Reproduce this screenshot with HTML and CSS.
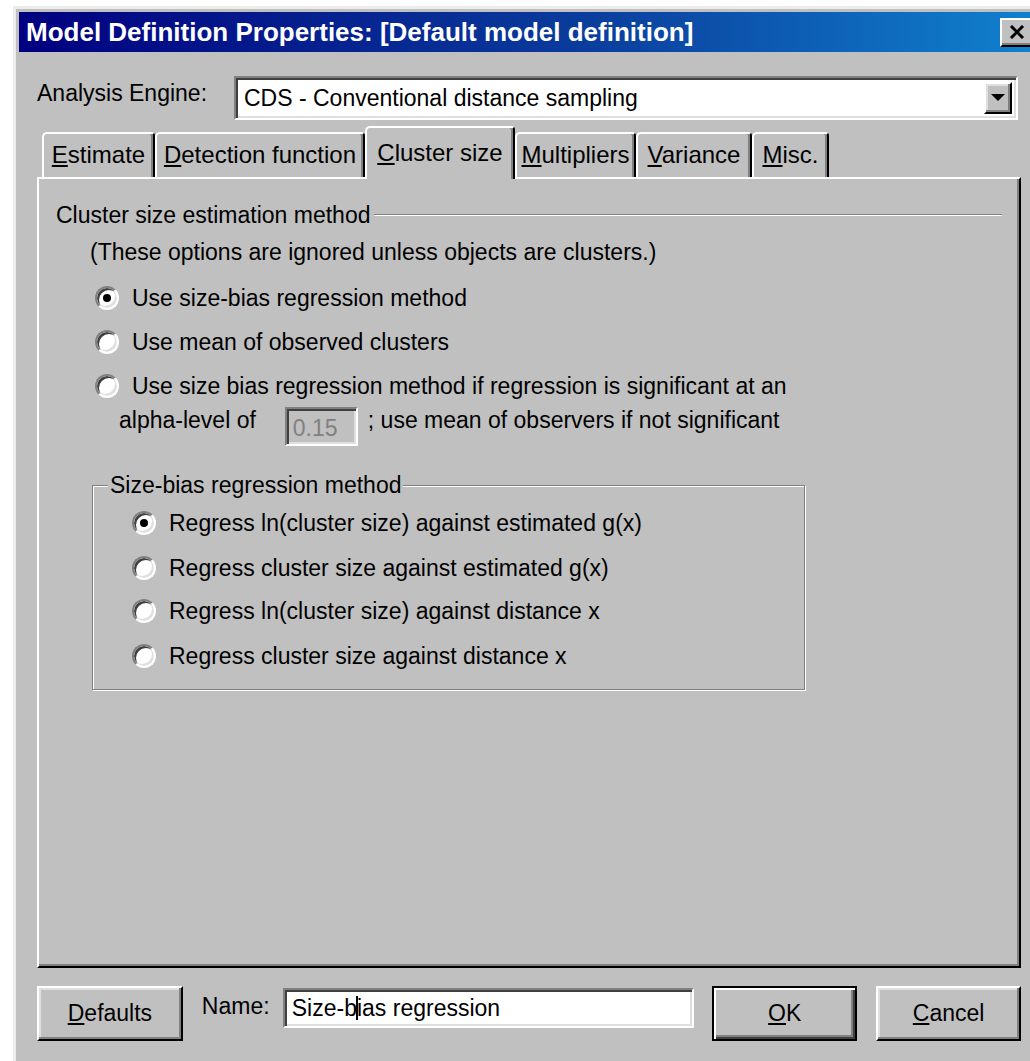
FILE: index.html
```html
<!DOCTYPE html>
<html lang="en">
<head>
<meta charset="utf-8">
<title>Model Definition Properties</title>
<link rel="stylesheet" href="styles.css">
</head>
<body>
<div class="window">
  <div class="titlebar">
    <span class="title">Model Definition Properties: [Default model definition]</span>
    <span class="close-btn">
      <svg width="16" height="14" viewBox="0 0 16 14"><path d="M2 1 L14 13 M14 1 L2 13" stroke="#000" stroke-width="3" fill="none"/></svg>
    </span>
  </div>

  <div class="content">
    <div class="engine-row">
      <span class="engine-label">Analysis Engine:</span>
      <div class="combo sunken">
        <span class="combo-text">CDS - Conventional distance sampling</span>
        <span class="drop-btn raised">
          <svg width="14" height="8" viewBox="0 0 14 8"><path d="M0 0 H14 L7 7 Z" fill="#000"/></svg>
        </span>
      </div>
    </div>

    <div class="tabs">
      <div class="tab tab-estimate"><span><u>E</u>stimate</span></div>
      <div class="tab tab-detection"><span><u>D</u>etection function</span></div>
      <div class="tab tab-cluster active"><span><u>C</u>luster size</span></div>
      <div class="tab tab-multipliers"><span><u>M</u>ultipliers</span></div>
      <div class="tab tab-variance"><span><u>V</u>ariance</span></div>
      <div class="tab tab-misc"><span><u>M</u>isc.</span></div>
    </div>

    <div class="panel">
      <div class="legend-row">
        <span>Cluster size estimation method</span>
        <span class="etch"></span>
      </div>
      <div class="note">(These options are ignored unless objects are clusters.)</div>

      <div class="option first">
        <span class="radio checked"></span>
        <span>Use size-bias regression method</span>
      </div>
      <div class="option">
        <span class="radio"></span>
        <span>Use mean of observed clusters</span>
      </div>
      <div class="option">
        <span class="radio"></span>
        <span>Use size bias regression method if regression is significant at an</span>
      </div>
      <div class="option-cont">
        <span>alpha-level of</span>
        <span class="alpha-field sunken">0.15</span>
        <span class="after-field">; use mean of observers if not significant</span>
      </div>

      <div class="group">
        <div class="group-title">Size-bias regression method</div>
        <div class="gopt g1">
          <span class="radio checked"></span>
          <span>Regress ln(cluster size) against estimated g(x)</span>
        </div>
        <div class="gopt g2">
          <span class="radio"></span>
          <span>Regress cluster size against estimated g(x)</span>
        </div>
        <div class="gopt g3">
          <span class="radio"></span>
          <span>Regress ln(cluster size) against distance x</span>
        </div>
        <div class="gopt g4">
          <span class="radio"></span>
          <span>Regress cluster size against distance x</span>
        </div>
      </div>
    </div>

    <div class="footer">
      <button class="btn raised btn-defaults" type="button"><u>D</u>efaults</button>
      <span class="name-label">Name:</span>
      <div class="name-field sunken">Size-b<span class="caret"></span>ias regression</div>
      <button class="btn btn-ok" type="button"><u>O</u>K</button>
      <button class="btn raised btn-cancel" type="button"><u>C</u>ancel</button>
    </div>
  </div>
</div>
</body>
</html>
```

FILE: styles.css
```css
* {
  box-sizing: border-box;
}

html,
body {
  margin: 0;
  height: 100%;
}

body {
  background: #fff;
  overflow: hidden;
  font-family: "Liberation Sans", Arial, sans-serif;
  font-size: 23px;
  color: #000;
}

/* window frame */
.window {
  margin: 6px 0 0 13px;
  width: 1040px;
  height: 1070px;
  background: #c0c0c0;
  border-top: 3px solid #ececec;
  border-left: 3px solid #ececec;
  padding: 3px 0 0 3px;
}

.titlebar {
  display: flex;
  align-items: center;
  height: 40px;
  padding: 0 19px 0 7px;
  background: linear-gradient(90deg, #000080 0%, #0a3d9c 55%, #1084d0 100%);
}

.title {
  flex: 1;
  color: #fff;
  font-weight: bold;
  font-size: 26px;
  white-space: nowrap;
}

.close-btn {
  width: 34px;
  height: 29px;
  display: flex;
  align-items: center;
  justify-content: center;
  background: #c0c0c0;
  border: 2px solid;
  border-color: #fff #000 #000 #fff;
  box-shadow: inset -2px -2px 0 #808080;
}

/* shared 3D edges */
.sunken {
  border: 2px solid;
  border-color: #808080 #fff #fff #808080;
  box-shadow: inset 2px 2px 0 #404040, inset -2px -2px 0 #dfdfdf;
}

.raised {
  border: 2px solid;
  border-color: #fff #000 #000 #fff;
  box-shadow: inset -2px -2px 0 #808080, inset 2px 2px 0 #dfdfdf;
}

.content {
  width: 984px;
  margin-left: 18px;
  padding-top: 24px;
}

/* analysis engine combo */
.engine-row {
  display: flex;
  align-items: flex-start;
  height: 44px;
}

.engine-label {
  width: 197px;
  padding-top: 4px;
  line-height: 26px;
  white-space: nowrap;
}

.combo {
  width: 784px;
  height: 44px;
  display: flex;
  align-items: center;
  background: #fff;
  padding: 0 4px 0 8px;
}

.combo-text {
  flex: 1;
  line-height: 26px;
}

.drop-btn {
  width: 28px;
  height: 32px;
  display: flex;
  align-items: center;
  justify-content: center;
  background: #c0c0c0;
}

/* tab strip */
.tabs {
  display: flex;
  align-items: flex-end;
  height: 51px;
  margin-top: 6px;
  padding-left: 5px;
  position: relative;
  z-index: 1;
}

.tab {
  height: 45px;
  display: flex;
  align-items: center;
  justify-content: center;
  font-size: 24px;
  background: #c0c0c0;
  border-top: 2px solid #fff;
  border-left: 2px solid #fff;
  border-right: 2px solid #000;
  border-top-left-radius: 5px;
  border-top-right-radius: 4px;
  box-shadow: inset -2px 0 0 #808080;
  white-space: nowrap;
}

.tab span {
  padding-bottom: 2px;
}

.tab-estimate { width: 113px; }
.tab-detection { width: 210px; }
.tab-cluster { width: 150px; }
.tab-multipliers { width: 121px; }
.tab-variance { width: 116px; }
.tab-misc { width: 77px; }

.tab.active {
  height: 53px;
  margin-bottom: -2px;
  position: relative;
  z-index: 2;
}

/* tab page */
.panel {
  height: 791px;
  border: 2px solid;
  border-color: #fff #000 #000 #fff;
  box-shadow: inset -2px -2px 0 #808080;
  padding: 23px 0 0 17px;
}

.legend-row {
  display: flex;
  align-items: center;
  height: 26px;
  white-space: nowrap;
}

.etch {
  flex: 1;
  height: 2px;
  border-top: 1px solid #808080;
  border-bottom: 1px solid #fff;
  margin: 0 17px 0 4px;
}

.note {
  line-height: 26px;
  margin: 11px 0 0 34px;
}

.option {
  display: flex;
  align-items: center;
  height: 26px;
  margin: 18px 0 0 39px;
  white-space: nowrap;
}

.option.first {
  margin-top: 20px;
}

.option .radio,
.gopt .radio {
  margin-right: 13px;
}

.option-cont {
  display: flex;
  align-items: flex-start;
  margin: 8px 0 0 63px;
  line-height: 26px;
  white-space: nowrap;
}

.alpha-field {
  width: 73px;
  height: 39px;
  margin: 0 0 0 29px;
  padding: 6px 0 0 6px;
  color: #808080;
  background: #c0c0c0;
}

.after-field {
  margin-left: 10px;
}

/* radio buttons */
.radio {
  flex: none;
  width: 24px;
  height: 24px;
  border-radius: 50%;
  background: #fff;
  border: 2px solid;
  border-color: #808080 #fff #fff #808080;
  box-shadow: inset 2px 2px 0 #404040, inset -2px -2px 0 #dfdfdf;
  display: flex;
  align-items: center;
  justify-content: center;
}

.radio.checked::after {
  content: "";
  width: 8px;
  height: 8px;
  border-radius: 50%;
  background: #000;
}

/* size-bias group box */
.group {
  width: 713px;
  height: 205px;
  margin: 39px 0 0 36px;
  border: 1px solid #808080;
  box-shadow: inset 1px 1px 0 #fff, 1px 1px 0 #fff;
  padding-left: 39px;
}

.group-title {
  width: fit-content;
  line-height: 26px;
  margin: -14px 0 0 -24px;
  padding: 0 2px;
  background: #c0c0c0;
  white-space: nowrap;
}

.gopt {
  display: flex;
  align-items: center;
  height: 26px;
  white-space: nowrap;
}

.g1 { margin-top: 12px; }
.g2 { margin-top: 19px; }
.g3 { margin-top: 17px; }
.g4 { margin-top: 19px; }

/* bottom row */
.footer {
  display: flex;
  align-items: flex-start;
  margin-top: 18px;
}

.btn {
  height: 55px;
  width: 145px;
  font-family: inherit;
  font-size: 23px;
  color: #000;
  background: #c0c0c0;
  padding: 0;
}

.btn-defaults {
  width: 146px;
}

.name-label {
  margin-left: 19px;
  width: 81px;
  padding-top: 7px;
  line-height: 26px;
}

.name-field {
  width: 412px;
  height: 40px;
  margin-top: 2px;
  padding: 0 0 0 7px;
  background: #fff;
  display: flex;
  align-items: center;
  white-space: nowrap;
}

.caret {
  display: inline-block;
  width: 2px;
  height: 24px;
  background: #000;
  margin: 0 -1px;
}

.btn-ok {
  margin-left: 18px;
  border: 2px solid #000;
  box-shadow: inset 2px 2px 0 #fff, inset -2px -2px 0 #404040, inset -4px -4px 0 #808080;
}

.btn-cancel {
  margin-left: 19px;
}
```
